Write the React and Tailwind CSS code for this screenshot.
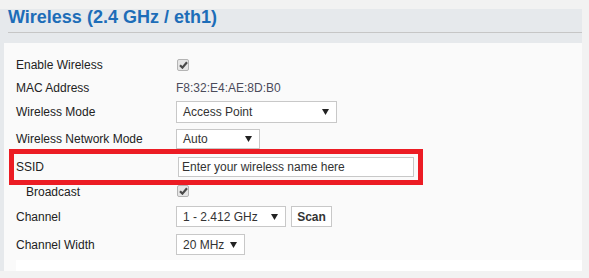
import React from "react";

function Caret() {
  return (
    <svg width="7" height="6" viewBox="0 0 7 6" className="shrink-0">
      <path d="M0 0 H7 L3.5 6 Z" fill="#222" />
    </svg>
  );
}

function Check() {
  return (
    <div className="w-[12px] h-[12px] rounded-[2px] border border-[#b4b4b4] bg-[#e6e6e6] flex items-center justify-center">
      <svg width="9" height="8" viewBox="0 0 9 8">
        <path d="M1 4.2 L3.4 6.6 L8 1.2" stroke="#4a4a4a" strokeWidth="2.2" fill="none" />
      </svg>
    </div>
  );
}

function Select({ value, width, height }) {
  return (
    <div
      className={`flex items-center justify-between bg-white border border-[#c8c8c8] pl-[6px] pr-[7px] text-[12px] text-[#333] ${width} ${height}`}
    >
      <span>{value}</span>
      <Caret />
    </div>
  );
}

function Row({ label, height, indent, children }) {
  return (
    <div className={`flex items-center ${height}`}>
      <div className={`w-[160px] text-[12px] text-[#222] ${indent ? "pl-[10px]" : ""}`}>{label}</div>
      <div className="flex items-center">{children}</div>
    </div>
  );
}

export default function App() {
  return (
    <div className="w-[589px] h-[278px] bg-[#f2f2f2] pt-[9px] font-['Liberation_Sans',Arial,sans-serif]">
      <div className="w-[582px] bg-[#e6e9ec]">
        <div className="ml-[8px] border-b border-[#c6c6c6] pb-[6px]">
          <h2 className="text-[18px] leading-[17px] font-bold text-[#1d6db8]">Wireless (2.4 GHz / eth1)</h2>
        </div>

        <div className="ml-[4px] mt-[10px] bg-[#fafafa]">
          <div className="relative px-[12px] pt-[11px] pb-[2px]">
            <Row label="Enable Wireless" height="h-[22px]">
              <div className="ml-[1px]">
                <Check />
              </div>
            </Row>
            <Row label="MAC Address" height="h-[23px]">
              <span className="text-[12px] text-[#4b4b5a]">F8:32:E4:AE:8D:B0</span>
            </Row>
            <Row label="Wireless Mode" height="h-[26px]">
              <Select value="Access Point" width="w-[161px]" height="h-[22px]" />
            </Row>
            <Row label="Wireless Network Mode" height="h-[28px]">
              <Select value="Auto" width="w-[84px]" height="h-[20px]" />
            </Row>
            <div className="relative">
              <Row label="SSID" height="h-[28px]">
                <div className="ml-[2px] w-[236px] h-[20px] bg-white border border-[#c8c8c8] flex items-center px-[3px] text-[12px] text-[#333]">
                  Enter your wireless name here
                </div>
              </Row>
              <div className="absolute left-[-7px] top-[-4px] w-[414px] h-[36px] border-[5px] border-[#ec1c24] pointer-events-none" />
            </div>
            <Row label="Broadcast" height="h-[21px]" indent>
              <div className="ml-[1px] mt-[-2px]">
                <Check />
              </div>
            </Row>
            <Row label="Channel" height="h-[29px]">
              <Select value="1 - 2.412 GHz" width="w-[110px]" height="h-[21px]" />
              <button className="ml-[5px] h-[21px] w-[41px] border border-[#c8c8c8] bg-white text-[12px] font-bold text-[#333]">
                Scan
              </button>
            </Row>
            <Row label="Channel Width" height="h-[27px]">
              <Select value="20 MHz" width="w-[69px]" height="h-[21px]" />
            </Row>
          </div>
          <div className="ml-[12px] h-[11px] bg-white" />
        </div>
      </div>
    </div>
  );
}
